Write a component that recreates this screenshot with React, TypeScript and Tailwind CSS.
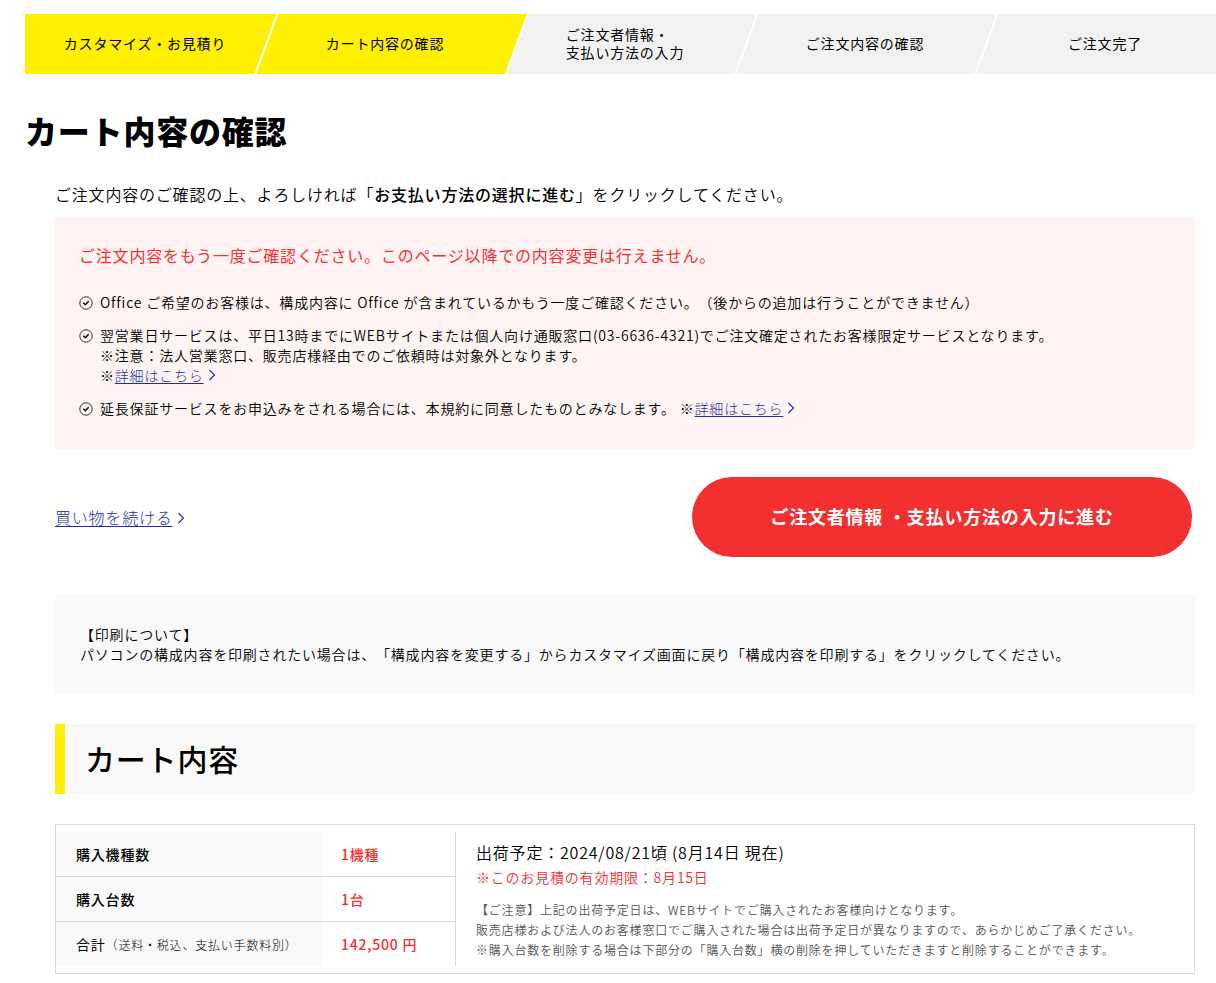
import React from "react";

interface Step {
  lines: string[];
  done: boolean;
}

const STEPS: Step[] = [
  { lines: ["カスタマイズ・お見積り"], done: true },
  { lines: ["カート内容の確認"], done: true },
  { lines: ["ご注文者情報・", "支払い方法の入力"], done: false },
  { lines: ["ご注文内容の確認"], done: false },
  { lines: ["ご注文完了"], done: false },
];

const SUMMARY_ROWS = [
  { label: "購入機種数", note: "", value: "1機種" },
  { label: "購入台数", note: "", value: "1台" },
  { label: "合計", note: "（送料・税込、支払い手数料別）", value: "142,500 円" },
];

// Slanted line between two steps of the same colour
const StepDivider: React.FC = () => (
  <svg
    className="absolute top-0 -right-[14px] z-10"
    width="26"
    height="60"
    viewBox="0 0 26 60"
    aria-hidden="true"
  >
    <path d="M24.6 -1L2 61" stroke="#fff" strokeWidth="2" fill="none" />
  </svg>
);

// Slanted end of the last finished step
const StepArrow: React.FC = () => (
  <svg
    className="absolute top-0 left-full z-10"
    width="26"
    height="60"
    viewBox="0 0 26 60"
    aria-hidden="true"
  >
    <path d="M0 0H22L0 60Z" fill="#fff000" />
    <path d="M23 -1L0.3 61" stroke="#fff" strokeWidth="1.5" fill="none" />
  </svg>
);

const CheckIcon: React.FC = () => (
  <svg
    className="mt-1 shrink-0"
    width="14"
    height="14"
    viewBox="0 0 14 14"
    fill="none"
    stroke="#000"
    aria-hidden="true"
  >
    <circle cx="7" cy="7" r="6.2" strokeWidth="0.8" />
    <path d="M4.4 6.8L6.3 8.7L9.7 5.3" strokeWidth="1.5" />
  </svg>
);

const Chevron: React.FC = () => (
  <svg
    className="ml-1 inline-block align-baseline"
    width="8"
    height="12"
    viewBox="0 0 8 12"
    fill="none"
    stroke="#1c2fa8"
    strokeWidth="1.1"
    aria-hidden="true"
  >
    <path d="M1.5 1L6.5 6L1.5 11" />
  </svg>
);

const TextLink: React.FC<{ children: React.ReactNode }> = ({ children }) => (
  <a href="#" className="font-light text-[#1c2fa8]">
    <span className="underline underline-offset-2">{children}</span>
    <Chevron />
  </a>
);

const StepBar: React.FC = () => (
  <ol className="flex ml-[25px] -mr-[9px]">
    {STEPS.map((step, i) => (
      <li
        key={step.lines[0]}
        className={`relative flex flex-1 h-[60px] items-center justify-center pb-0.5 text-sm leading-[18px] font-normal ${
          step.done ? "bg-[#fff000]" : "bg-[#f2f2f2]"
        }`}
      >
        <span>
          {step.lines.map((line) => (
            <span key={line} className="block">
              {line}
            </span>
          ))}
        </span>
        {i === 1 && <StepArrow />}
        {i !== 1 && i < STEPS.length - 1 && <StepDivider />}
      </li>
    ))}
  </ol>
);

const Notice: React.FC = () => (
  <section className="mt-[11px] bg-[#fff4f3] px-6 pt-[26px] pb-[31px]">
    <p className="text-base font-normal leading-6 text-[#f23030]">
      ご注文内容をもう一度ご確認ください。このページ以降での内容変更は行えません。
    </p>
    <ul className="mt-[25px] flex flex-col gap-[13px] text-sm leading-5">
      <li className="flex gap-[7px]">
        <CheckIcon />
        <p>
          Office ご希望のお客様は、構成内容に Office
          が含まれているかもう一度ご確認ください。（後からの追加は行うことができません）
        </p>
      </li>
      <li className="flex gap-[7px]">
        <CheckIcon />
        <p>
          翌営業日サービスは、平日13時までにWEBサイトまたは個人向け通販窓口(03-6636-4321)でご注文確定されたお客様限定サービスとなります。
          <br />
          ※注意：法人営業窓口、販売店様経由でのご依頼時は対象外となります。
          <br />※<TextLink>詳細はこちら</TextLink>
        </p>
      </li>
      <li className="flex gap-[7px]">
        <CheckIcon />
        <p>
          延長保証サービスをお申込みをされる場合には、本規約に同意したものとみなします。
          ※<TextLink>詳細はこちら</TextLink>
        </p>
      </li>
    </ul>
  </section>
);

const CartSummary: React.FC = () => (
  <div className="mt-[30px] flex border border-[#d9d9d9] py-[7px]">
    <table className="w-[400px] shrink-0 table-fixed border-separate border-spacing-0 border-r border-[#d9d9d9] text-sm leading-5">
      <tbody>
        {SUMMARY_ROWS.map((row) => (
          <tr key={row.label} className="group">
            <th
              scope="row"
              className="h-[45px] w-[265px] border-b border-[#d9d9d9] bg-[#f9f9f9] pl-5 text-left font-medium group-last:h-11 group-last:border-b-0 group-last:font-normal"
            >
              {row.label}
              {row.note && (
                <span className="text-xs font-light">{row.note}</span>
              )}
            </th>
            <td className="border-b border-[#d9d9d9] pl-5 font-medium text-[#f23030] group-last:border-b-0">
              {row.value}
            </td>
          </tr>
        ))}
      </tbody>
    </table>
    <div className="flex-1 pt-2 pl-5">
      <p className="text-base leading-6">
        出荷予定：2024/08/21頃 (8月14日 現在)
      </p>
      <p className="mt-[3px] text-sm leading-5 text-[#f23030]">
        ※このお見積の有効期限：8月15日
      </p>
      <p className="mt-[13px] text-xs leading-5 text-[#555]">
        【ご注意】上記の出荷予定日は、WEBサイトでご購入されたお客様向けとなります。
        <br />
        販売店様および法人のお客様窓口でご購入された場合は出荷予定日が異なりますので、あらかじめご了承ください。
        <br />
        ※購入台数を削除する場合は下部分の「購入台数」横の削除を押していただきますと削除することができます。
      </p>
    </div>
  </div>
);

export default function App() {
  return (
    <div
      lang="ja"
      className="overflow-x-hidden bg-white pt-3.5 pb-2 font-['Noto_Sans_CJK_JP',sans-serif] text-base font-[350] tracking-wider text-black [text-spacing-trim:space-all]"
    >
      <StepBar />
      <h1 className="mt-9 ml-[25px] text-[32px] leading-10 font-black">
        カート内容の確認
      </h1>
      <main className="mt-8 mr-[21px] ml-[55px]">
        <p className="leading-6">
          ご注文内容のご確認の上、よろしければ「
          <span className="font-medium">お支払い方法の選択に進む</span>
          」をクリックしてください。
        </p>
        <Notice />

        <div className="mt-7 flex items-center justify-between pr-[3px]">
          <TextLink>買い物を続ける</TextLink>
          <button
            type="button"
            className="h-20 w-[500px] rounded-full bg-[#f23030] pb-0.5 text-lg font-bold text-white"
          >
            ご注文者情報 ・支払い方法の入力に進む
          </button>
        </div>

        <section className="mt-[38px] bg-[#f9f9f9] px-[25px] pt-[29px] pb-[30px] text-sm leading-5">
          <p>【印刷について】</p>
          <p>
            パソコンの構成内容を印刷されたい場合は、「構成内容を変更する」からカスタマイズ画面に戻り「構成内容を印刷する」をクリックしてください。
          </p>
        </section>

        <h2 className="mt-[30px] flex h-[70px] items-center border-l-10 border-[#fff000] bg-[#f9f9f9] pb-0.5 pl-5 text-3xl font-medium">
          カート内容
        </h2>
        <CartSummary />
      </main>
    </div>
  );
}
